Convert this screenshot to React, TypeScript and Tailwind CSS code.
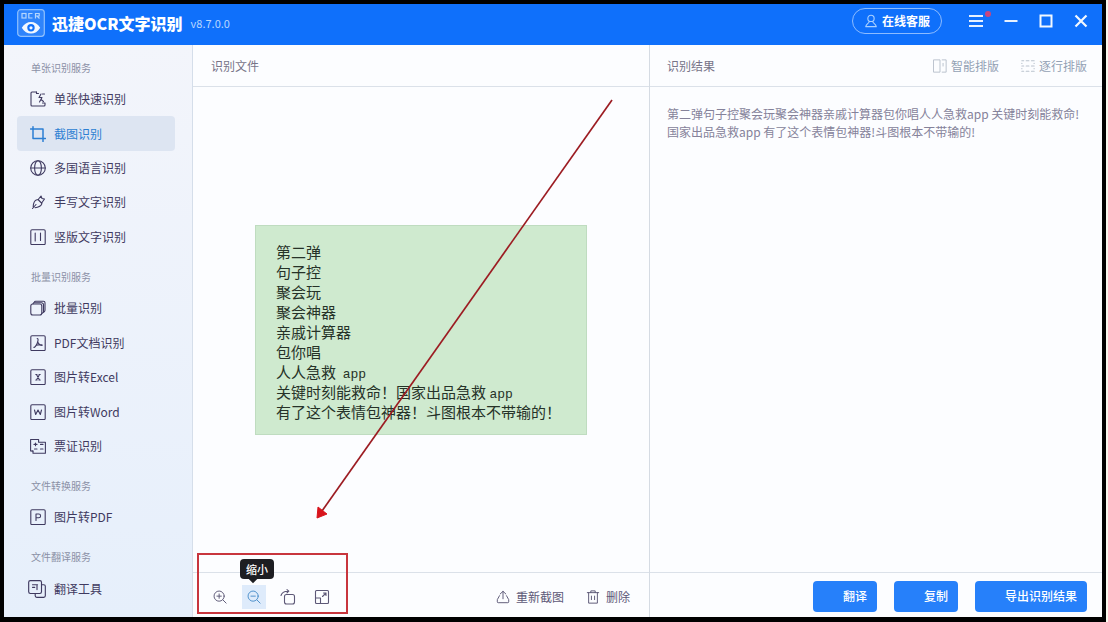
import type { ReactNode } from 'react';

type IconProps = { children: ReactNode; className?: string; width?: number };

function Icon({ children, className = 'size-4', width = 1.1 }: IconProps) {
  return (
    <svg
      viewBox="0 0 16 16"
      className={`shrink-0 ${className}`}
      fill="none"
      stroke="currentColor"
      strokeWidth={width}
      strokeLinecap="round"
      strokeLinejoin="round"
      aria-hidden="true"
    >
      {children}
    </svg>
  );
}

const sheet = <rect x="0.8" y="0.8" width="14.4" height="14.8" rx="1.2" />;

const icons = {
  quick: (
    <Icon>
      <path d="M6.5 1H2a1 1 0 0 0-1 1v12a1 1 0 0 0 1 1h12a1 1 0 0 0 1-1v-2h-2.500" />
      <path d="M6.500 1v1.500h2M11 3 9 6.500h3L9.500 11M12.500 3h2M11 8.500l2.500 2" />
    </Icon>
  ),
  crop: (
    <Icon width={1.5}>
      <path d="M3 0.8v11.700h12.500M0.500 3h12.500v12.500" />
    </Icon>
  ),
  globe: (
    <Icon>
      <circle cx="8" cy="8" r="7.300" />
      <ellipse cx="8" cy="8" rx="3.400" ry="7.300" />
      <path d="M0.800 8h14.400" />
    </Icon>
  ),
  pen: (
    <Icon>
      <path d="M2.500 14.500 6 10.500M3.200 12.500c.2-3 .8-5.500 3-6.500l2-.5L11 2l1 2.500 2.500.500-2.500 3.500-.500 2c-1 2-4 2.800-6.500 3.200M8 5.500l3.500 3.500" />
    </Icon>
  ),
  vertical: (
    <Icon>
      {sheet}
      <path d="M5.200 4v8M10.500 4v7.500" />
    </Icon>
  ),
  batch: (
    <Icon>
      <rect x="0.800" y="4" width="11" height="11" rx="2" />
      <path d="M3 3.800 4.300 2a1.500 1.500 0 0 1 1.200-.700h8a1.500 1.500 0 0 1 1.500 1.500v7.500a2 2 0 0 1-.800 1.500l-2.200 1.600" />
      <path d="M4.500 2.700h7a2 2 0 0 1 2 2v7" />
    </Icon>
  ),
  pdf: (
    <Icon>
      {sheet}
      <path d="M7.200 3.500c1.500 0 .800 3-.2 5.200C6 10.800 4.500 12.500 3.800 12.300M7.600 6.500c.6 2 2.400 3.700 4.600 4M5.800 10.500c2-.8 4-1 6.200-.6" />
    </Icon>
  ),
  excel: (
    <Icon>
      {sheet}
      <path d="M6.500 5.500 9.500 11M9.500 5.500 6.500 11M5.800 5.500h1.200M9 11h1.200M5.800 11H7M9 5.500h1.200" />
    </Icon>
  ),
  word: (
    <Icon>
      {sheet}
      <path d="m4.500 6 1.200 4.500L8 6l2.300 4.500L11.500 6" />
    </Icon>
  ),
  ticket: (
    <Icon>
      <path d="M.600 1.500h8v2.800h6.800v11H3v-2.300H.6z" />
      <path d="M5.500 5v2.800M4 6.400h3M10.500 6.400h2.500M4.500 11h2.500M10.500 11h2.500M3 13h-1" />
    </Icon>
  ),
  toPdf: (
    <Icon>
      {sheet}
      <path d="M6 11.500V5h2.700a1.900 1.900 0 0 1 0 3.800H6" />
    </Icon>
  ),
  translate: (
    <Icon className="-ml-0.5 size-[18px]" width={1}>
      <rect x="0.600" y="0.600" width="11.400" height="11.400" rx="1.500" />
      <path d="M12 4.200h2a1.400 1.400 0 0 1 1.400 1.400V14a1.400 1.400 0 0 1-1.400 1.400H7.800A1.400 1.400 0 0 1 6.400 14v-2M4 4.200h4.500M4 6.500h2M8 5v3.500" />
    </Icon>
  ),
};

type Item = { label: string; icon: ReactNode; active?: boolean };

const groups: { title: string; items: Item[] }[] = [
  {
    title: '单张识别服务',
    items: [
      { label: '单张快速识别', icon: icons.quick },
      { label: '截图识别', icon: icons.crop, active: true },
      { label: '多国语言识别', icon: icons.globe },
      { label: '手写文字识别', icon: icons.pen },
      { label: '竖版文字识别', icon: icons.vertical },
    ],
  },
  {
    title: '批量识别服务',
    items: [
      { label: '批量识别', icon: icons.batch },
      { label: 'PDF文档识别', icon: icons.pdf },
      { label: '图片转Excel', icon: icons.excel },
      { label: '图片转Word', icon: icons.word },
      { label: '票证识别', icon: icons.ticket },
    ],
  },
  { title: '文件转换服务', items: [{ label: '图片转PDF', icon: icons.toPdf }] },
  { title: '文件翻译服务', items: [{ label: '翻译工具', icon: icons.translate }] },
];

const app = <span className="font-['Liberation_Mono','Noto_Sans_CJK_SC',monospace] text-[13px]">app</span>;

const lines: ReactNode[] = [
  '第二弹',
  '句子控',
  '聚会玩',
  '聚会神器',
  '亲戚计算器',
  '包你唱',
  <>人人急救{'  '}{app}</>,
  <>关键时刻能救命{'\uFF01'}国家出品急救 {app}</>,
  <>有了这个表情包神器{'\uFF01'}斗图根本不带输的{'\uFF01'}</>,
];

function TitleBar() {
  return (
    <header className="flex h-[41px] shrink-0 items-center bg-[#0f70fb] pr-1 pl-[13px] text-white">
      <svg viewBox="0 0 28 28" className="-mt-1 size-7 shrink-0" aria-hidden="true">
        <rect x="0.700" y="0.700" width="26.600" height="26.600" rx="3" fill="#2f84fb" stroke="#8fc0fd" strokeWidth="1.200" />
        <g fill="none" stroke="#b5d6fe" strokeWidth="1.200">
          <rect x="5" y="4.500" width="4" height="4.500" />
          <path d="M15.500 4.500h-3.700V9h3.700M18.500 9.500v-5h3.700v2.500h-3.700M20 7l2.500 2.500" />
        </g>
        <path d="M4.800 18.800C7 14.800 10.500 13 14 13s7 1.800 9.200 5.800c-2.200 4-5.700 5.800-9.200 5.800s-7-1.800-9.200-5.800z" fill="#f2f8ff" />
        <circle cx="14" cy="18.800" r="3.700" fill="#0f70fb" />
        <circle cx="14" cy="18.800" r="1.600" fill="#f2f8ff" />
      </svg>
      <h1 className="ml-[7px] pb-1 text-base leading-5 font-black whitespace-nowrap">迅捷OCR文字识别</h1>
      <span className="ml-2 pb-1 text-[11px] leading-5 text-[#b9d7ff]">v8.7.0.0</span>
      <div className="ml-auto flex items-center pb-[7px]">
        <button className="mr-4 flex h-[26px] items-center gap-1 rounded-full border border-[#8dbcff] px-[11px] text-xs font-bold">
          <Icon className="size-3.5 text-[#a9d0ff]" width={1.3}>
            <circle cx="8" cy="5" r="3.600" />
            <path d="M6 8.500c0 2-3.500 2.500-4 6h12c-.5-3.500-4-4-4-6" />
          </Icon>
          在线客服
        </button>
        <button className="relative flex h-6 w-[35px] items-center justify-center" aria-label="菜单">
          <svg viewBox="0 0 14 14" className="size-3.5" stroke="#e6f1ff" strokeWidth="2" aria-hidden="true">
            <path d="M0 2h14M0 7h14M0 12h14" />
          </svg>
          <span className="absolute top-0.5 right-0.5 size-1.5 rounded-full bg-[#c8467f]" />
        </button>
        <button className="flex h-6 w-[35px] items-center justify-center" aria-label="最小化">
          <svg viewBox="0 0 14 14" className="size-3.5" stroke="#e6f1ff" strokeWidth="2" aria-hidden="true">
            <path d="M0.500 7h13" />
          </svg>
        </button>
        <button className="flex h-6 w-[35px] items-center justify-center" aria-label="最大化">
          <svg viewBox="0 0 14 14" className="size-3.5" fill="none" stroke="#f2f8ff" strokeWidth="2" aria-hidden="true">
            <rect x="1.500" y="1.500" width="11" height="11" />
          </svg>
        </button>
        <button className="flex h-6 w-[35px] items-center justify-center" aria-label="关闭">
          <svg viewBox="0 0 14 14" className="size-3.5" stroke="#f2f8ff" strokeWidth="2.200" aria-hidden="true">
            <path d="m1.500 1.500 11 11M12.500 1.500l-11 11" />
          </svg>
        </button>
      </div>
    </header>
  );
}

function Sidebar() {
  return (
    <nav className="flex min-h-0 flex-col border-r border-[#d5deea] bg-linear-to-b from-[#f3f5fb] to-[#e6effb] pb-[11px]">
      {groups.map((group) => (
        <section key={group.title} className="contents">
          <h2 className="flex h-[37px] shrink-0 items-center pt-[7px] pl-[27px] text-[10px] text-[#8b90a6]">{group.title}</h2>
          {group.items.map((item) => (
            <a
              key={item.label}
              href="#"
              className={
                item.active
                  ? 'mr-[17px] ml-[13px] flex flex-1 items-center gap-2 rounded bg-[#dde5f2] pl-[13px] text-xs text-[#2c7fd3]'
                  : 'mr-[17px] ml-[13px] flex flex-1 items-center gap-2 rounded pl-[13px] text-xs text-[#3f3a60]'
              }
            >
              {item.icon}
              {item.label}
            </a>
          ))}
        </section>
      ))}
    </nav>
  );
}

function SourcePanel() {
  return (
    <section className="flex min-h-0 min-w-0 flex-col border-r border-[#d5dbe3]">
      <h2 className="flex h-[42px] shrink-0 items-center border-b border-[#dbe1e9] pl-[18px] text-xs text-[#777488]">识别文件</h2>
      <div className="relative flex min-h-0 flex-1 items-center justify-center">
        <div className="w-[332px] border border-[#bfdcc0] bg-[#cfeacf] px-5 pt-4 pb-3 text-[15px] leading-5 whitespace-pre text-[#263228]">
          {lines.map((line, index) => (
            <p key={index} className="h-5">{line}</p>
          ))}
        </div>
        <svg className="pointer-events-none absolute top-0 left-0 h-[440px] w-[430px]" viewBox="0 0 430 440" aria-hidden="true">
          <path d="M419 13 129 424" stroke="#9c1c22" strokeWidth="1.700" fill="none" />
          <path d="m124 431 1-11 9 7z" fill="#d8141c" stroke="#d8141c" />
        </svg>
      </div>
      <footer className="relative flex h-[45px] shrink-0 items-center border-t border-[#dbe1e9] pr-[19px] pl-[15px] pt-1 text-xs text-[#5d5877]">
        <div className="flex items-center gap-2.5">
          <button className="flex size-6 items-center justify-center" aria-label="放大">
            <Icon className="size-3.5">
              <circle cx="7" cy="7" r="5.800" />
              <path d="m11.300 11.300 3.700 3.700M4.500 7h5M7 4.500v5" />
            </Icon>
          </button>
          <button className="relative flex size-6 items-center justify-center bg-[#deebfb] text-[#4b8fca]" aria-label="缩小">
            <Icon className="size-3.5">
              <circle cx="7" cy="7" r="5.800" />
              <path d="m11.300 11.300 3.700 3.700M4.500 7h5" />
            </Icon>
            <span className="absolute bottom-[30px] left-1/2 z-10 flex h-5 w-[34px] -translate-x-3.5 items-center justify-center rounded-sm bg-[#1d1e22] text-[11px] font-medium text-white">
              缩小
              <span className="absolute top-[17px] left-2.5 size-1.5 rotate-45 bg-[#1d1e22]" />
            </span>
          </button>
          <button className="flex size-6 items-center justify-center" aria-label="旋转">
            <Icon>
              <rect x="4.500" y="5.500" width="10" height="9.500" rx="2" />
              <path d="M1 6.500C1.800 3.500 4 2 8.500 2.200M7 .6l1.800 1.600L7 3.800" />
            </Icon>
          </button>
          <button className="flex size-6 items-center justify-center" aria-label="适应窗口">
            <Icon>
              <rect x="1.500" y="1.500" width="13" height="13" rx="1" />
              <path d="M8.500 7.500 12 4M9.500 4H12v2.500M1.500 9h5v5.500" />
            </Icon>
          </button>
        </div>
        <div className="ml-auto flex items-center gap-[22px]">
          <button className="flex items-center gap-1.5">
            <Icon className="size-3.5">
              <path d="M4 6.500 1.500 11v2.500a1 1 0 0 0 1 1h11a1 1 0 0 0 1-1V11L12 6.500M8 10V1.500M4.800 4.500 8 1.500l3.200 3" />
            </Icon>
            重新截图
          </button>
          <button className="flex items-center gap-1.5">
            <Icon className="size-3.5">
              <path d="M1.500 3h13M5.500 3V1h5v2M3 3v12h10V3M6.200 7v4M9.800 7v4" />
            </Icon>
            删除
          </button>
        </div>
        <div className="pointer-events-none absolute -top-5 left-1 h-[61px] w-[151px] border-2 border-[#c8353d]" />
      </footer>
    </section>
  );
}

function ResultPanel() {
  return (
    <section className="flex min-h-0 min-w-0 flex-col">
      <div className="flex h-[42px] shrink-0 items-center border-b border-[#dbe1e9] pr-[15px] pl-[17px] text-xs">
        <h2 className="text-[#777488]">识别结果</h2>
        <div className="ml-auto flex gap-[22px] text-[#93a1b4]">
          <button className="flex items-center gap-1">
            <Icon className="size-3.5 text-[#b9c2cd]">
              <path d="M1 1h7v14H1zM10.500 1H15v14h-4.500M11.500 5v3" />
            </Icon>
            智能排版
          </button>
          <button className="flex items-center gap-1">
            <Icon className="size-3.5 text-[#b9c2cd]" width={1.4}>
              <path d="M1 2h2M6 2h3M12 2h3M1 8h2M6 8h3M12 8h3M1 14h2M6 14h3M12 14h3M1 5v.1M1 11v.1M15 5v.1M15 11v.1" />
            </Icon>
            逐行排版
          </button>
        </div>
      </div>
      <p className="min-h-0 flex-1 pt-[18px] pr-2 pl-[17px] text-xs leading-[18px] text-[#85829a]">
        第二弹句子控聚会玩聚会神器亲戚计算器包你唱人人急救app 关键时刻能救命!
        <br />
        国家出品急救app 有了这个表情包神器!斗图根本不带输的!
      </p>
      <footer className="flex h-[45px] shrink-0 items-center justify-end gap-[17px] border-t border-[#dbe1e9] pt-0.5 pr-[15px] text-xs font-medium text-white">
        <button className="h-[31px] w-16 rounded-sm bg-[#2680fa] pr-2.5 text-right">翻译</button>
        <button className="h-[31px] w-16 rounded-sm bg-[#2680fa] pr-2.5 text-right">复制</button>
        <button className="h-[31px] w-28 rounded-sm bg-[#2680fa] pr-2.5 text-right">导出识别结果</button>
      </footer>
    </section>
  );
}

export default function App() {
  return (
    <div className="h-screen bg-[#faf8ee] pr-0.5 font-['Noto_Sans_CJK_SC',sans-serif]">
      <div className="flex h-full flex-col border-4 border-b-[5px] border-black bg-[#fcfdff]">
        <TitleBar />
        <main className="grid min-h-0 flex-1 grid-cols-[189px_457fr_452fr]">
          <Sidebar />
          <SourcePanel />
          <ResultPanel />
        </main>
      </div>
    </div>
  );
}
